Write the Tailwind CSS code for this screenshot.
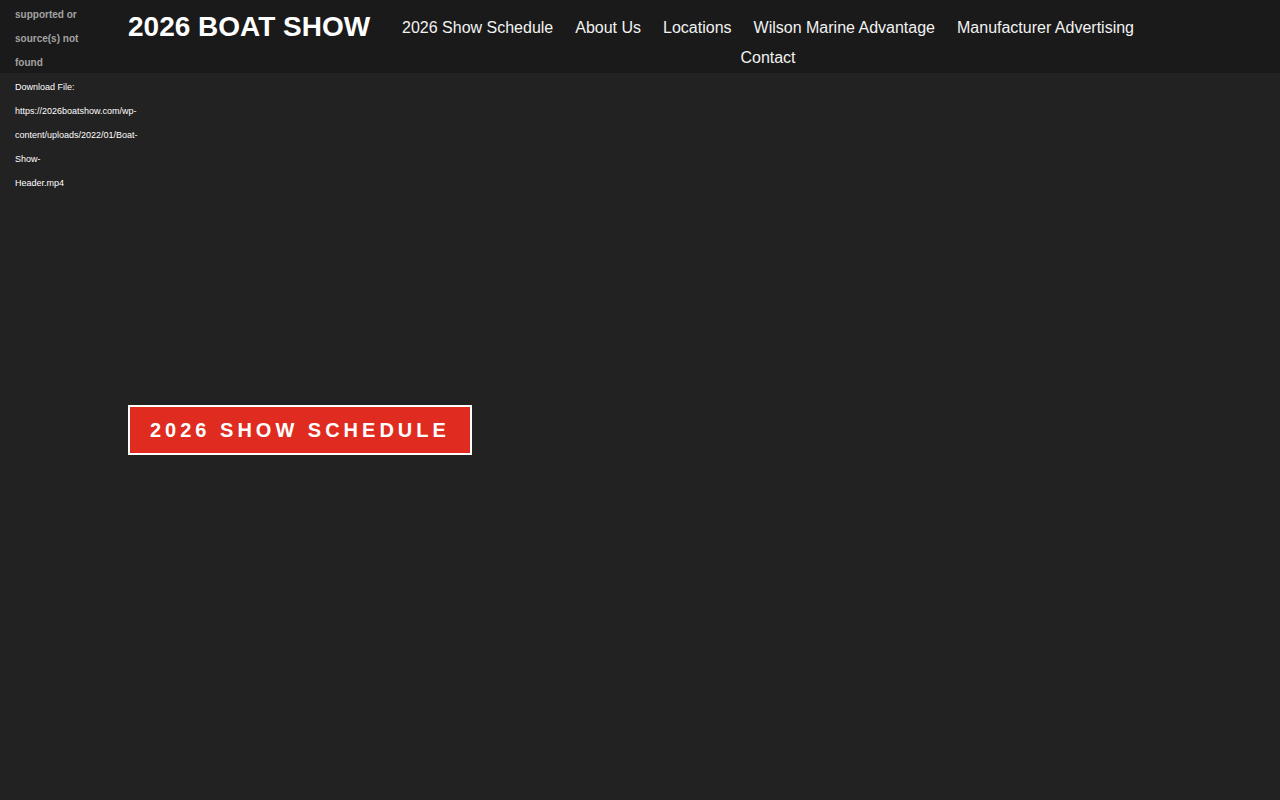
<!DOCTYPE html>
<html lang="en">
  <head>
    <meta charset="utf-8">
    <meta name="viewport" content="width=device-width, initial-scale=1">
    <title>2026 BOAT SHOW</title>
    <!-- Tailwind CSS CDN -->
    <script src="https://cdn.jsdelivr.net/npm/@tailwindcss/browser@4"></script>
  </head>
  <body class="relative min-h-screen flex flex-col bg-[#222222] font-['Liberation_Sans',Arial,sans-serif] text-white">
    <!-- Header -->
    <header class="bg-[#1a1a1a]">
      <div class="w-4/5 mx-auto flex items-start">
        <h1 class="w-1/4 shrink-0 pt-2 text-[28px] leading-[38px] font-bold whitespace-nowrap"><a href="#">2026 BOAT SHOW</a></h1>
        <nav class="w-3/4 pt-[13px]">
          <ul class="flex flex-wrap justify-center gap-x-[22px] text-base leading-[30px] text-[#f2f2f2]">
            <li><a href="#">2026 Show Schedule</a></li>
            <li><a href="#">About Us</a></li>
            <li><a href="#">Locations</a></li>
            <li><a href="#">Wilson Marine Advantage</a></li>
            <li><a href="#">Manufacturer Advertising</a></li>
            <li><a href="#">Contact</a></li>
          </ul>
        </nav>
      </div>
    </header>

    <!-- Video fallback message, lies over the header -->
    <div class="absolute top-[3px] left-[15px] w-32">
      <p class="w-20 text-[10px] leading-6 font-bold text-[#a3a3a3]">supported or source(s) not found</p>
      <a href="#" class="block text-[9px] leading-6">Download File: https://2026boatshow.com/wp-content/uploads/2022/01/Boat-Show-<br>Header.mp4</a>
    </div>

    <!-- Hero -->
    <main class="grow w-4/5 mx-auto flex items-center">
      <a href="#" class="mb-[14px] px-5 border-2 border-white bg-[#e02b20] text-xl leading-[46px] font-bold tracking-[4px]">2026 SHOW SCHEDULE</a>
    </main>
  </body>
</html>
